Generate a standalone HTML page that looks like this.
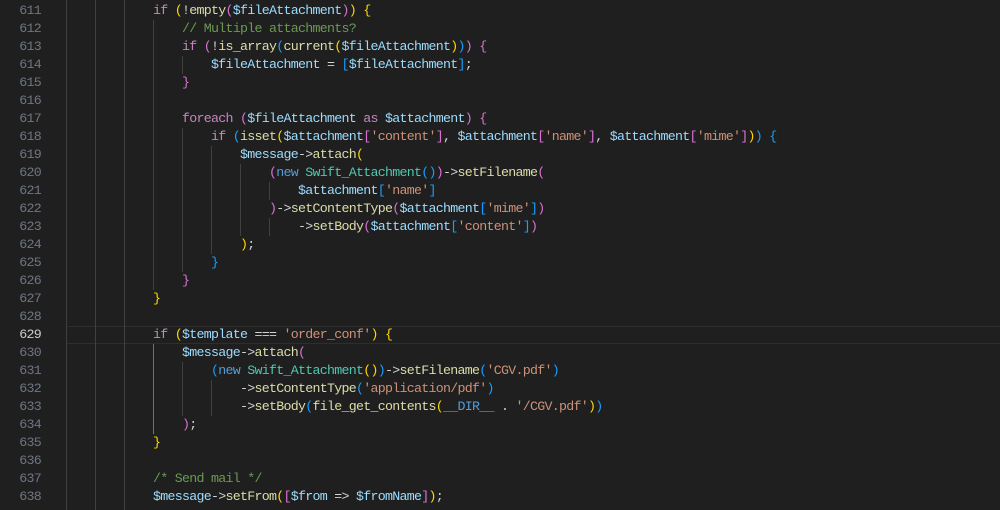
<!DOCTYPE html>
<html><head><meta charset="utf-8"><style>
html,body{margin:0;padding:0;background:#1f1f1f;width:1000px;height:510px;overflow:hidden}
#ed{position:relative;width:1000px;height:510px;font-family:"Liberation Mono",monospace;font-size:13.3px;letter-spacing:-0.73px}
.ln{position:absolute;left:0;width:41px;text-align:right;color:#6e7681;height:18px;line-height:18px}
.ln.a{color:#cccccc}
.cl{position:absolute;left:66px;height:18px;line-height:18px;white-space:pre;color:#d4d4d4}
.g{position:absolute;width:1px;background:#404040}
.g.act{background:#707070}
.k{color:#c586c0}.v{color:#9cdcfe}.f{color:#dcdcaa}.s{color:#ce9178}.c{color:#6a9955}.t{color:#4ec9b0}.b{color:#569cd6}
.y{color:#ffd700}.o{color:#da70d6}.u{color:#179fff}
#cur{position:absolute;left:66px;top:326px;width:934px;height:16px;border:1px solid #2e2e2e;}
</style></head><body><div id="ed">
<div id="cur"></div>
<div class="g" style="left:66px;top:0;height:510px"></div>
<div class="g" style="left:95px;top:0;height:510px"></div>
<div class="g" style="left:124px;top:0;height:510px"></div>
<div class="g" style="left:153px;top:20px;height:270px"></div>
<div class="g act" style="left:153px;top:344px;height:90px"></div>
<div class="g" style="left:182px;top:56px;height:18px"></div>
<div class="g" style="left:182px;top:128px;height:144px"></div>
<div class="g" style="left:182px;top:362px;height:54px"></div>
<div class="g" style="left:211px;top:146px;height:108px"></div>
<div class="g" style="left:211px;top:380px;height:36px"></div>
<div class="g" style="left:240px;top:164px;height:72px"></div>
<div class="g" style="left:269px;top:182px;height:18px"></div>
<div class="g" style="left:269px;top:218px;height:18px"></div>

<div class="ln" style="top:2px">611</div><div class="cl" style="top:2px">            <span class="k">if</span> <span class="y">(</span>!<span class="f">empty</span><span class="o">(</span><span class="v">$fileAttachment</span><span class="o">)</span><span class="y">)</span> <span class="y">{</span></div>
<div class="ln" style="top:20px">612</div><div class="cl" style="top:20px">                <span class="c">// Multiple attachments?</span></div>
<div class="ln" style="top:38px">613</div><div class="cl" style="top:38px">                <span class="k">if</span> <span class="o">(</span>!<span class="f">is_array</span><span class="u">(</span><span class="f">current</span><span class="y">(</span><span class="v">$fileAttachment</span><span class="y">)</span><span class="u">)</span><span class="o">)</span> <span class="o">{</span></div>
<div class="ln" style="top:56px">614</div><div class="cl" style="top:56px">                    <span class="v">$fileAttachment</span> = <span class="u">[</span><span class="v">$fileAttachment</span><span class="u">]</span>;</div>
<div class="ln" style="top:74px">615</div><div class="cl" style="top:74px">                <span class="o">}</span></div>
<div class="ln" style="top:92px">616</div>
<div class="ln" style="top:110px">617</div><div class="cl" style="top:110px">                <span class="k">foreach</span> <span class="o">(</span><span class="v">$fileAttachment</span> <span class="k">as</span> <span class="v">$attachment</span><span class="o">)</span> <span class="o">{</span></div>
<div class="ln" style="top:128px">618</div><div class="cl" style="top:128px">                    <span class="k">if</span> <span class="u">(</span><span class="f">isset</span><span class="y">(</span><span class="v">$attachment</span><span class="o">[</span><span class="s">'content'</span><span class="o">]</span>, <span class="v">$attachment</span><span class="o">[</span><span class="s">'name'</span><span class="o">]</span>, <span class="v">$attachment</span><span class="o">[</span><span class="s">'mime'</span><span class="o">]</span><span class="y">)</span><span class="u">)</span> <span class="u">{</span></div>
<div class="ln" style="top:146px">619</div><div class="cl" style="top:146px">                        <span class="v">$message</span>-&gt;<span class="f">attach</span><span class="y">(</span></div>
<div class="ln" style="top:164px">620</div><div class="cl" style="top:164px">                            <span class="o">(</span><span class="b">new</span> <span class="t">Swift_Attachment</span><span class="u">()</span><span class="o">)</span>-&gt;<span class="f">setFilename</span><span class="o">(</span></div>
<div class="ln" style="top:182px">621</div><div class="cl" style="top:182px">                                <span class="v">$attachment</span><span class="u">[</span><span class="s">'name'</span><span class="u">]</span></div>
<div class="ln" style="top:200px">622</div><div class="cl" style="top:200px">                            <span class="o">)</span>-&gt;<span class="f">setContentType</span><span class="o">(</span><span class="v">$attachment</span><span class="u">[</span><span class="s">'mime'</span><span class="u">]</span><span class="o">)</span></div>
<div class="ln" style="top:218px">623</div><div class="cl" style="top:218px">                                -&gt;<span class="f">setBody</span><span class="o">(</span><span class="v">$attachment</span><span class="u">[</span><span class="s">'content'</span><span class="u">]</span><span class="o">)</span></div>
<div class="ln" style="top:236px">624</div><div class="cl" style="top:236px">                        <span class="y">)</span>;</div>
<div class="ln" style="top:254px">625</div><div class="cl" style="top:254px">                    <span class="u">}</span></div>
<div class="ln" style="top:272px">626</div><div class="cl" style="top:272px">                <span class="o">}</span></div>
<div class="ln" style="top:290px">627</div><div class="cl" style="top:290px">            <span class="y">}</span></div>
<div class="ln" style="top:308px">628</div>
<div class="ln a" style="top:326px">629</div><div class="cl" style="top:326px">            <span class="k">if</span> <span class="y">(</span><span class="v">$template</span> === <span class="s">'order_conf'</span><span class="y">)</span> <span class="y">{</span></div>
<div class="ln" style="top:344px">630</div><div class="cl" style="top:344px">                <span class="v">$message</span>-&gt;<span class="f">attach</span><span class="o">(</span></div>
<div class="ln" style="top:362px">631</div><div class="cl" style="top:362px">                    <span class="u">(</span><span class="b">new</span> <span class="t">Swift_Attachment</span><span class="y">()</span><span class="u">)</span>-&gt;<span class="f">setFilename</span><span class="u">(</span><span class="s">'CGV.pdf'</span><span class="u">)</span></div>
<div class="ln" style="top:380px">632</div><div class="cl" style="top:380px">                        -&gt;<span class="f">setContentType</span><span class="u">(</span><span class="s">'application/pdf'</span><span class="u">)</span></div>
<div class="ln" style="top:398px">633</div><div class="cl" style="top:398px">                        -&gt;<span class="f">setBody</span><span class="u">(</span><span class="f">file_get_contents</span><span class="y">(</span><span class="b">__DIR__</span> . <span class="s">'/CGV.pdf'</span><span class="y">)</span><span class="u">)</span></div>
<div class="ln" style="top:416px">634</div><div class="cl" style="top:416px">                <span class="o">)</span>;</div>
<div class="ln" style="top:434px">635</div><div class="cl" style="top:434px">            <span class="y">}</span></div>
<div class="ln" style="top:452px">636</div>
<div class="ln" style="top:470px">637</div><div class="cl" style="top:470px">            <span class="c">/* Send mail */</span></div>
<div class="ln" style="top:488px">638</div><div class="cl" style="top:488px">            <span class="v">$message</span>-&gt;<span class="f">setFrom</span><span class="y">(</span><span class="o">[</span><span class="v">$from</span> =&gt; <span class="v">$fromName</span><span class="o">]</span><span class="y">)</span>;</div>
</div></body></html>
